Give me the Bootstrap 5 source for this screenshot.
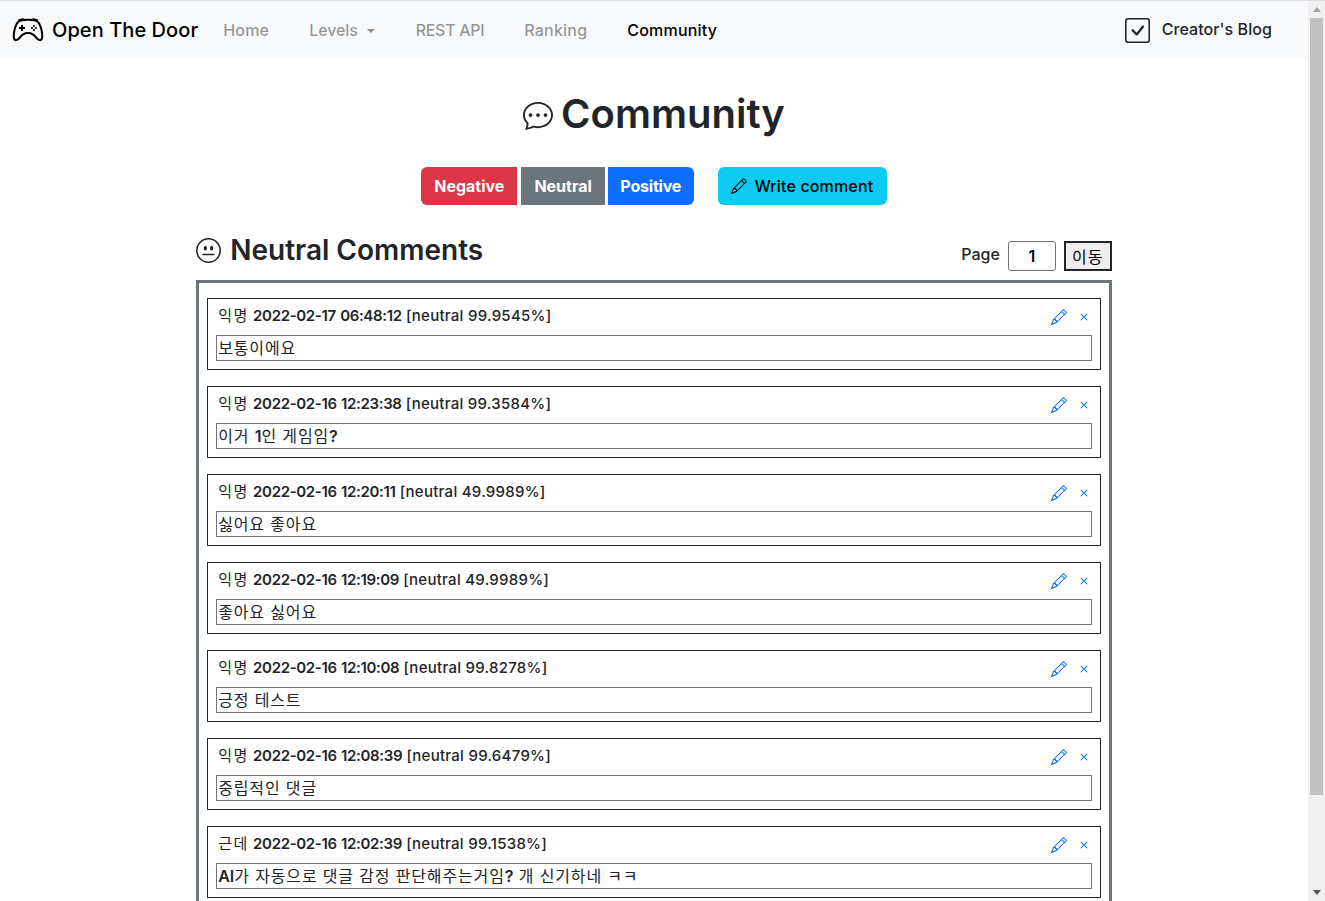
<!DOCTYPE html>
<html lang="ko">
<head>
<meta charset="utf-8">
<title>Community</title>
<link rel="stylesheet" href="https://cdn.jsdelivr.net/npm/bootstrap@5.3.0/dist/css/bootstrap.min.css">
<style>
body{font-family:"Inter","Noto Sans CJK KR",sans-serif;font-weight:500;color:#212529;overflow:hidden}
.shell{height:100vh;border-top:1px solid #dee2e6;overflow:hidden}
.pagecol{min-width:0;overflow:hidden}
.barcol{width:17px;background:#f1f1f1}
.barthumb{height:777px;margin:0 2px;background:#c1c1c1}
.barbtn{height:17px}
.arrowup{width:0;border:4.5px solid transparent;border-top:0;border-bottom:5px solid #a3a3a3}
.arrowdown{width:0;border:4.5px solid transparent;border-bottom:0;border-top:5px solid #505050}
.topbar{height:58px;padding:0 12px}
.brandlink{font-size:20px;color:#000;text-decoration:none;letter-spacing:.07px}
.brandlink svg{margin-right:8px}
.topbar .nav-link{font-size:16px;padding:0;color:rgba(0,0,0,.42);letter-spacing:.2px}
.topbar .nav-link.active{color:#000}
.topbar .nav-link.tightlink{letter-spacing:-.3px;margin-left:1px}
.topbar .nav-link.lvlink{letter-spacing:-.1px}
.topbar .dropdown-toggle::after{margin-left:9px;vertical-align:3px}
.navset{gap:40px;margin-left:25px}
.bloglink{color:#212529;text-decoration:none;font-size:16px;margin-right:24px;gap:12px;letter-spacing:.07px}
.blogtext{margin-bottom:2px}
.pagetitle{font-size:40px;font-weight:600;margin:31px 0 29px;line-height:48px}
.pagetitle svg{margin-right:8px;vertical-align:-2px}
.actions .btn{font-size:16px;height:38px;padding:0 13px;font-weight:700;--bs-btn-border-width:0}
.actions .btn.posbtn{padding:0 12.5px;margin-left:3px;letter-spacing:-.2px}
.actions .writebtn{font-weight:500;margin-left:24px;padding:0 13.5px 0 13px;letter-spacing:.15px}
.mainbox{width:70%;margin:0 auto}
.headrow{margin-top:28px}
.sectiontitle{font-size:28px;font-weight:600;margin:0 0 4px;line-height:34px}
.sectiontitle svg{margin-right:9px;vertical-align:-3px}
.pagerlabel{font-size:16px;margin-bottom:5px}
.pagerinput{width:48px;height:30px;border:1px solid #767676;border-radius:3px;text-align:center;font-weight:600;font-size:16px;color:#000;padding:0}
.pagerbtn{width:48px;height:30px;border:2px solid #212529;background:#efefef;color:#000;font-size:16px;padding:0;font-weight:400;letter-spacing:1px;font-family:"Noto Sans CJK KR",sans-serif}
.listframe{border:3px solid #6c757d;padding:15px 8px 130px;margin-top:9px}
.itembox{border:1px solid #212529;padding:6px 8px 8px;height:72px;margin-bottom:16px}
.itemhead{height:20px;padding-left:2px;font-size:15px;line-height:20px;letter-spacing:.27px}
.itemhead b{font-weight:600;letter-spacing:-.35px;word-spacing:1px}
.itemhead .who{font-weight:400;font-family:"Noto Sans CJK KR",sans-serif;font-size:15px;letter-spacing:1.5px}
.itemtext{border:1px solid #6c757d;height:26px;margin-top:10px;line-height:23px;font-size:16px;font-weight:400;padding:0 1px;white-space:nowrap;color:#212529;letter-spacing:.85px;font-family:"Noto Sans CJK KR",sans-serif}
.itemtext b{font-family:"Inter",sans-serif;font-weight:600;letter-spacing:0}
.itemtools{gap:9px;color:#0d6efd;margin-top:4px}
</style>
</head>
<body>
<svg width="0" height="0" class="position-absolute">
<symbol id="i-ctrl" viewBox="0 0 16 16"><path d="M11.5 6.027a.5.5 0 1 1-1 0 .5.5 0 0 1 1 0zm-1.5 1.5a.5.5 0 1 0 0-1 .5.5 0 0 0 0 1zm2.5-.5a.5.5 0 1 1-1 0 .5.5 0 0 1 1 0zm-1.5 1.5a.5.5 0 1 0 0-1 .5.5 0 0 0 0 1zm-6.5-3h1v1h1v1h-1v1h-1v-1h-1v-1h1v-1z"/><path d="M3.051 3.26a.5.5 0 0 1 .354-.613l1.932-.518a.5.5 0 0 1 .62.39c.655-.079 1.35-.117 2.043-.117.72 0 1.443.041 2.12.126a.5.5 0 0 1 .622-.399l1.932.518a.5.5 0 0 1 .306.729c.14.09.266.19.373.297.408.408.78 1.05 1.095 1.772.32.733.599 1.591.805 2.466.206.875.34 1.78.364 2.606.024.816-.059 1.602-.328 2.21a1.42 1.42 0 0 1-1.445.83c-.636-.067-1.115-.394-1.513-.773-.245-.232-.496-.526-.739-.808-.126-.148-.25-.292-.368-.423-.728-.804-1.597-1.527-3.224-1.527-1.627 0-2.496.723-3.224 1.527-.119.131-.242.275-.368.423-.243.282-.494.575-.739.808-.398.38-.877.706-1.513.773a1.42 1.42 0 0 1-1.445-.83c-.27-.608-.352-1.395-.329-2.21.024-.826.16-1.73.365-2.606.206-.875.486-1.733.805-2.466.315-.722.687-1.364 1.094-1.772a2.34 2.34 0 0 1 .433-.335.504.504 0 0 1-.028-.079zm2.036.412c-.877.185-1.469.443-1.733.708-.276.276-.587.783-.885 1.465a13.748 13.748 0 0 0-.748 2.295 12.351 12.351 0 0 0-.339 2.406c-.022.755.062 1.368.243 1.776a.42.42 0 0 0 .426.24c.327-.034.61-.199.929-.502.212-.202.4-.423.615-.674.133-.156.276-.323.44-.504C4.861 9.969 5.978 9.027 8 9.027s3.139.942 3.965 1.855c.164.181.307.348.44.504.214.251.403.472.615.674.318.303.601.468.929.503a.42.42 0 0 0 .426-.241c.18-.408.265-1.02.243-1.776a12.354 12.354 0 0 0-.339-2.406 13.753 13.753 0 0 0-.748-2.295c-.298-.682-.61-1.19-.885-1.465-.264-.265-.856-.523-1.733-.708-.85-.179-1.877-.27-2.913-.27-1.036 0-2.063.091-2.913.27z"/></symbol>
<symbol id="i-check" viewBox="0 0 16 16"><path d="M14 1a1 1 0 0 1 1 1v12a1 1 0 0 1-1 1H2a1 1 0 0 1-1-1V2a1 1 0 0 1 1-1h12zM2 0a2 2 0 0 0-2 2v12a2 2 0 0 0 2 2h12a2 2 0 0 0 2-2V2a2 2 0 0 0-2-2H2z"/><path d="M10.97 4.97a.75.75 0 0 1 1.071 1.05l-3.992 4.99a.75.75 0 0 1-1.08.02L4.324 8.384a.75.75 0 1 1 1.06-1.06l2.094 2.093 3.473-4.425a.235.235 0 0 1 .02-.022z"/></symbol>
<symbol id="i-chat" viewBox="0 0 16 16"><path d="M5 8a1 1 0 1 1-2 0 1 1 0 0 1 2 0zm4 0a1 1 0 1 1-2 0 1 1 0 0 1 2 0zm3 1a1 1 0 1 0 0-2 1 1 0 0 0 0 2z"/><path d="m2.165 15.803.02-.004c1.83-.363 2.948-.842 3.468-1.105A9.06 9.06 0 0 0 8 15c4.418 0 8-3.134 8-7s-3.582-7-8-7-8 3.134-8 7c0 1.76.743 3.37 1.97 4.6a10.437 10.437 0 0 1-.524 2.318l-.003.011a10.722 10.722 0 0 1-.244.637c-.079.186.074.394.273.362a21.673 21.673 0 0 0 .693-.125zm.8-3.108a1 1 0 0 0-.287-.801C1.618 10.83 1 9.468 1 8c0-3.192 3.004-6 7-6s7 2.808 7 6c0 3.193-3.004 6-7 6a8.06 8.06 0 0 1-2.088-.272 1 1 0 0 0-.711.074c-.387.196-1.24.57-2.634.893a10.97 10.97 0 0 0 .398-2z"/></symbol>
<symbol id="i-pencil" viewBox="0 0 16 16"><path d="M12.146.146a.5.5 0 0 1 .708 0l3 3a.5.5 0 0 1 0 .708l-10 10a.5.5 0 0 1-.168.11l-5 2a.5.5 0 0 1-.65-.65l2-5a.5.5 0 0 1 .11-.168l10-10zM11.207 2.5 13.5 4.793 14.793 3.5 12.5 1.207 11.207 2.5zm1.586 3L10.5 3.207 4 9.707V10h.5a.5.5 0 0 1 .5.5v.5h.5a.5.5 0 0 1 .5.5v.5h.293l6.5-6.5zm-9.761 5.175-.106.106-1.528 3.821 3.821-1.528.106-.106A.5.5 0 0 1 5 12.5V12h-.5a.5.5 0 0 1-.5-.5V11h-.5a.5.5 0 0 1-.468-.325z"/></symbol>
<symbol id="i-neutral" viewBox="0 0 16 16"><path d="M8 15A7 7 0 1 1 8 1a7 7 0 0 1 0 14zm0 1A8 8 0 1 0 8 0a8 8 0 0 0 0 16z"/><path d="M4 10.5a.5.5 0 0 0 .5.5h7a.5.5 0 0 0 0-1h-7a.5.5 0 0 0-.5.5zm3-4C7 5.672 6.552 5 6 5s-1 .672-1 1.5S5.448 8 6 8s1-.672 1-1.5zm4 0c0-.828-.448-1.5-1-1.5s-1 .672-1 1.5S9.448 8 10 8s1-.672 1-1.5z"/></symbol>
<symbol id="i-x" viewBox="0 0 16 16"><path d="M4.646 4.646a.5.5 0 0 1 .708 0L8 7.293l2.646-2.647a.5.5 0 0 1 .708.708L8.707 8l2.647 2.646a.5.5 0 0 1-.708.708L8 8.707l-2.646 2.647a.5.5 0 0 1-.708-.708L7.293 8 4.646 5.354a.5.5 0 0 1 0-.708z"/></symbol>
</svg>
<div class="shell d-flex">
<div class="pagecol flex-grow-1">
<nav class="topbar bg-light d-flex align-items-center">
  <a class="brandlink d-flex align-items-center" href="#"><svg width="32" height="32" fill="currentColor"><use href="#i-ctrl"/></svg>Open The Door</a>
  <div class="navset d-flex align-items-center">
    <a class="nav-link" href="#">Home</a>
    <a class="nav-link lvlink dropdown-toggle" href="#">Levels</a>
    <a class="nav-link tightlink" href="#">REST API</a>
    <a class="nav-link" href="#">Ranking</a>
    <a class="nav-link active" href="#">Community</a>
  </div>
  <a class="bloglink d-flex align-items-center ms-auto" href="#"><svg width="25" height="25" fill="currentColor"><use href="#i-check"/></svg><span class="blogtext">Creator's Blog</span></a>
</nav>
<main>
  <h1 class="pagetitle text-center"><svg width="30" height="30" fill="currentColor"><use href="#i-chat"/></svg>Community</h1>
  <div class="actions d-flex justify-content-center align-items-center">
    <div class="d-flex">
      <a class="btn btn-danger d-flex align-items-center rounded-0 rounded-start" href="#">Negative</a>
      <a class="btn btn-secondary d-flex align-items-center rounded-0 ms-1" href="#">Neutral</a>
      <a class="btn btn-primary posbtn d-flex align-items-center rounded-0 rounded-end" href="#">Positive</a>
    </div>
    <a class="btn btn-info writebtn d-flex align-items-center gap-2" href="#"><svg width="16" height="16" fill="currentColor"><use href="#i-pencil"/></svg>Write comment</a>
  </div>
  <div class="mainbox">
    <div class="headrow d-flex justify-content-between align-items-end">
      <h3 class="sectiontitle"><svg width="25" height="25" fill="currentColor"><use href="#i-neutral"/></svg>Neutral Comments</h3>
      <div class="d-flex align-items-center">
        <span class="pagerlabel me-2">Page</span>
        <input class="pagerinput me-2" type="text" value="1" aria-label="Page">
        <button class="pagerbtn" type="button">이동</button>
      </div>
    </div>
    <div class="listframe">
      <div class="itembox"><div class="itemhead d-flex justify-content-between"><span><span class="who">익명</span> <b>2022-02-17 06:48:12</b> [neutral 99.9545%]</span><span class="itemtools d-flex align-items-center"><svg width="16" height="16" fill="currentColor"><use href="#i-pencil"/></svg><svg width="16" height="16" fill="currentColor"><use href="#i-x"/></svg></span></div><div class="itemtext">보통이에요</div></div>
      <div class="itembox"><div class="itemhead d-flex justify-content-between"><span><span class="who">익명</span> <b>2022-02-16 12:23:38</b> [neutral 99.3584%]</span><span class="itemtools d-flex align-items-center"><svg width="16" height="16" fill="currentColor"><use href="#i-pencil"/></svg><svg width="16" height="16" fill="currentColor"><use href="#i-x"/></svg></span></div><div class="itemtext">이거 <b>1</b>인 게임임<b>?</b></div></div>
      <div class="itembox"><div class="itemhead d-flex justify-content-between"><span><span class="who">익명</span> <b>2022-02-16 12:20:11</b> [neutral 49.9989%]</span><span class="itemtools d-flex align-items-center"><svg width="16" height="16" fill="currentColor"><use href="#i-pencil"/></svg><svg width="16" height="16" fill="currentColor"><use href="#i-x"/></svg></span></div><div class="itemtext">싫어요 좋아요</div></div>
      <div class="itembox"><div class="itemhead d-flex justify-content-between"><span><span class="who">익명</span> <b>2022-02-16 12:19:09</b> [neutral 49.9989%]</span><span class="itemtools d-flex align-items-center"><svg width="16" height="16" fill="currentColor"><use href="#i-pencil"/></svg><svg width="16" height="16" fill="currentColor"><use href="#i-x"/></svg></span></div><div class="itemtext">좋아요 싫어요</div></div>
      <div class="itembox"><div class="itemhead d-flex justify-content-between"><span><span class="who">익명</span> <b>2022-02-16 12:10:08</b> [neutral 99.8278%]</span><span class="itemtools d-flex align-items-center"><svg width="16" height="16" fill="currentColor"><use href="#i-pencil"/></svg><svg width="16" height="16" fill="currentColor"><use href="#i-x"/></svg></span></div><div class="itemtext">긍정 테스트</div></div>
      <div class="itembox"><div class="itemhead d-flex justify-content-between"><span><span class="who">익명</span> <b>2022-02-16 12:08:39</b> [neutral 99.6479%]</span><span class="itemtools d-flex align-items-center"><svg width="16" height="16" fill="currentColor"><use href="#i-pencil"/></svg><svg width="16" height="16" fill="currentColor"><use href="#i-x"/></svg></span></div><div class="itemtext">중립적인 댓글</div></div>
      <div class="itembox"><div class="itemhead d-flex justify-content-between"><span><span class="who">근데</span> <b>2022-02-16 12:02:39</b> [neutral 99.1538%]</span><span class="itemtools d-flex align-items-center"><svg width="16" height="16" fill="currentColor"><use href="#i-pencil"/></svg><svg width="16" height="16" fill="currentColor"><use href="#i-x"/></svg></span></div><div class="itemtext"><b>AI</b>가 자동으로 댓글 감정 판단해주는거임<b>?</b> 개 신기하네 ㅋㅋ</div></div>
    </div>
  </div>
</main>
</div>
<div class="barcol flex-shrink-0 d-flex flex-column">
  <div class="barbtn d-flex align-items-center justify-content-center"><div class="arrowup"></div></div>
  <div class="barthumb"></div>
  <div class="flex-grow-1"></div>
  <div class="barbtn d-flex align-items-center justify-content-center"><div class="arrowdown"></div></div>
</div>
</div>
<script src="https://cdn.jsdelivr.net/npm/bootstrap@5.3.0/dist/js/bootstrap.bundle.min.js"></script>
</body>
</html>
